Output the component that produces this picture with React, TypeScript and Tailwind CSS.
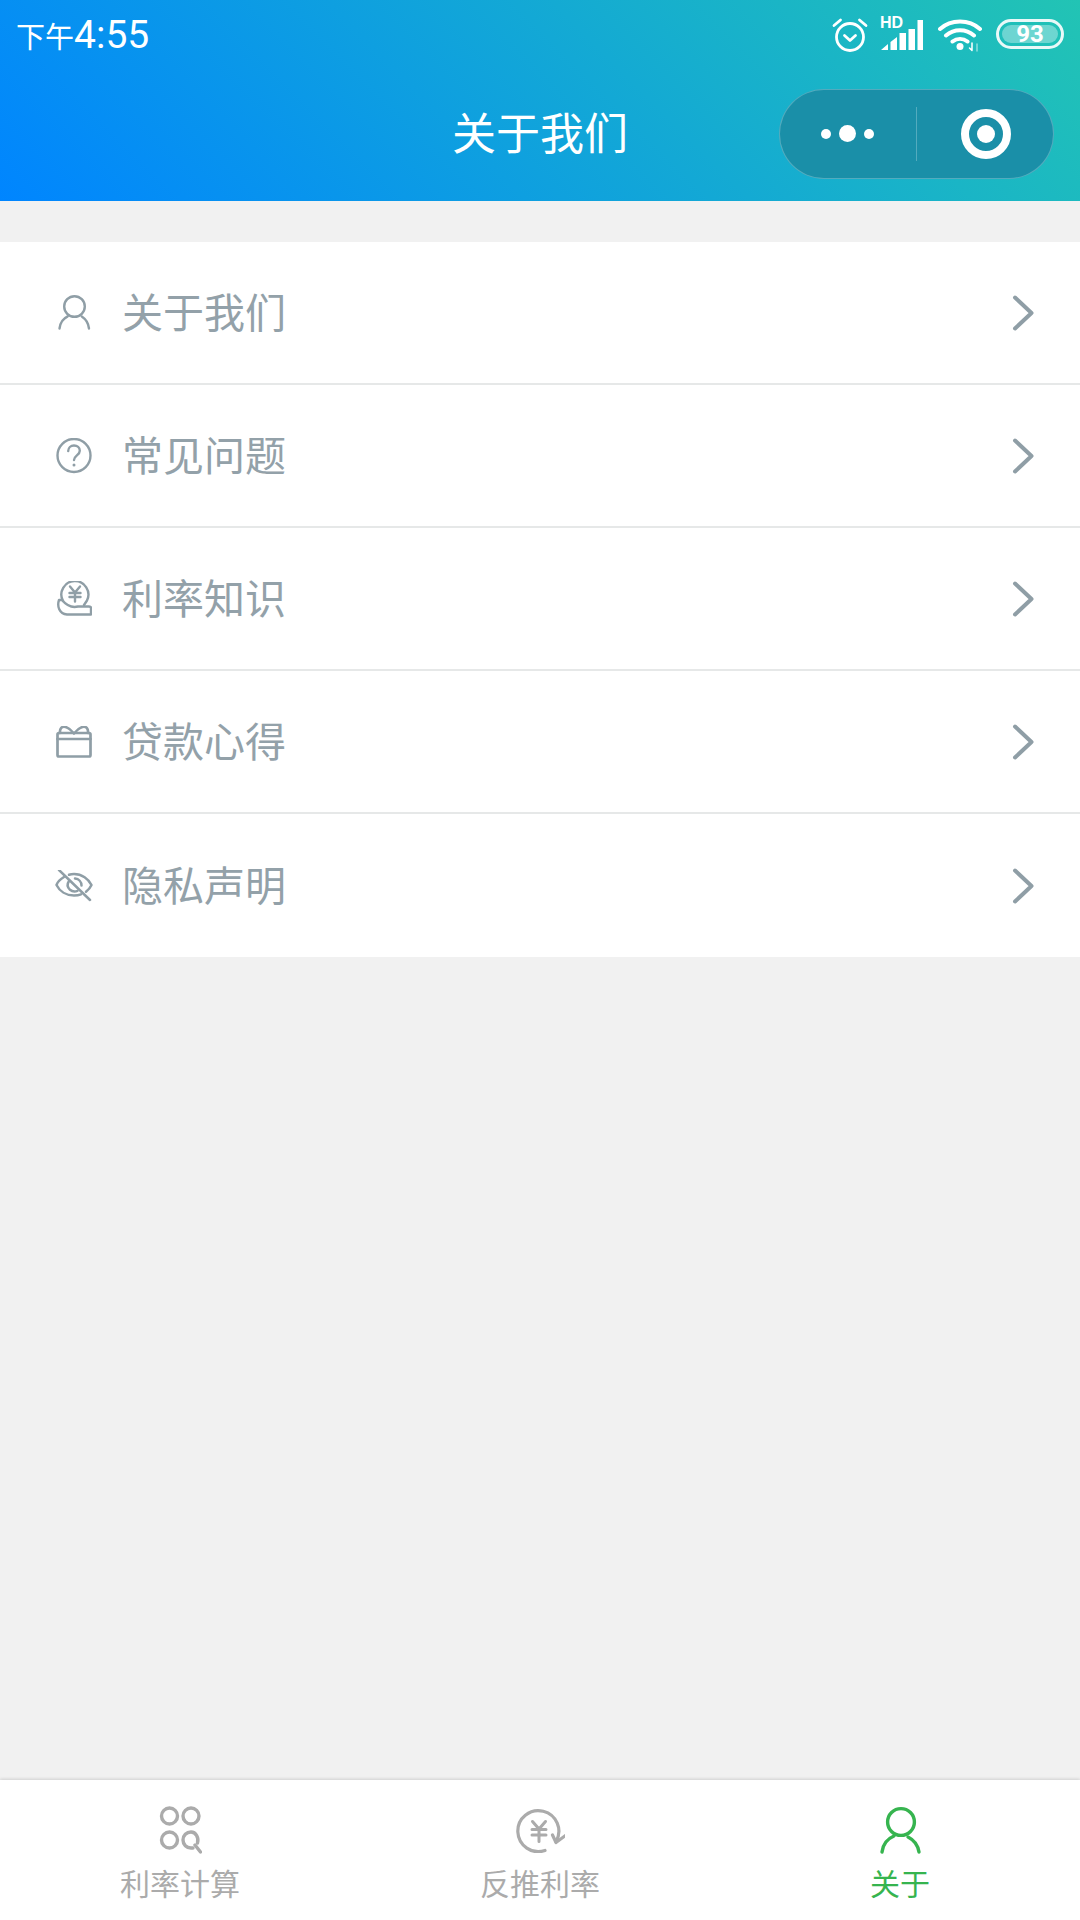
import React from 'react'

const CJK = "font-['Noto_Sans_CJK_SC','Noto_Sans',sans-serif]"

type IconProps = { className?: string }

const UserIcon = ({ className }: IconProps) => (
  <svg viewBox="0 0 36 36" fill="none" stroke="currentColor" strokeWidth="2.400" strokeLinecap="round" className={className}>
    <circle cx="18.500" cy="11.500" r="10.300" />
    <path d="M3.500 33.500c.6-5.600 3.600-10 8.200-12.200M33 33.500c-.6-5.600-3.300-9.400-7.200-12" />
  </svg>
)

const ActiveUserIcon = ({ className }: IconProps) => (
  <svg viewBox="0 0 44 48" fill="none" stroke="currentColor" strokeWidth="3.400" strokeLinecap="round" className={className}>
    <circle cx="23" cy="16" r="13.400" />
    <path d="M4 46C5 38 10 32.500 16 30M30 31c6 3 10 9 11 15" />
  </svg>
)

const HelpIcon = ({ className }: IconProps) => (
  <svg viewBox="0 0 36 36" fill="none" stroke="currentColor" strokeWidth="2.400" strokeLinecap="round" className={className}>
    <circle cx="18" cy="17.500" r="16.500" />
    <path d="M12.200 13.100c0-3.400 2.600-5.600 5.800-5.600s5.800 2.200 5.800 5.200c0 4.600-5.800 4.800-5.800 9.400" />
    <circle cx="18" cy="27.100" r="1.500" fill="currentColor" stroke="none" />
  </svg>
)

const MoneyHandIcon = ({ className }: IconProps) => (
  <svg viewBox="0 0 36 36" fill="none" stroke="currentColor" strokeWidth="2.400" strokeLinecap="round" strokeLinejoin="round" className={className}>
    <path d="M7 20A13.500 13.500 0 1 1 31 19.500L28 24" />
    <path d="M3 19C1 25 3 33 11 33.500H35V27c0-1-1-1.500-2-1.500H22c-6 1.500-11-.5-16-6.500z" />
    <path d="M14 5.500l5 6 5-6M13.500 12h11M13.500 16h11M19 11.500v9" />
  </svg>
)

const GiftIcon = ({ className }: IconProps) => (
  <svg viewBox="0 0 36 32" fill="none" stroke="currentColor" strokeWidth="2.700" strokeLinecap="round" strokeLinejoin="round" className={className}>
    <rect x="1.500" y="7" width="33" height="23.500" rx="1.500" />
    <path d="M1.500 13h33M4 7C3.500 2.500 6 0 9.500 1c3.500 1 6.500 4 8.500 6.500 2-2.500 5-5.500 8.500-6.500C30 0 32.500 2.500 32 7" />
  </svg>
)

const EyeOffIcon = ({ className }: IconProps) => (
  <svg viewBox="0 0 38 32" fill="none" stroke="currentColor" strokeWidth="2.500" strokeLinecap="round" strokeLinejoin="round" className={className}>
    <path d="M9 7C5.500 9 2.500 12 1.500 15c3 6 9.500 10.500 17.500 10.500 2.500 0 5-.4 7-1.200M14 4.800C15.500 4.300 17.200 4 19 4c8 0 14.500 5 17.500 11-1.200 2.600-3.200 5-5.500 6.800" />
    <path d="M14 11c-2 3-1.500 6.500 1 8.800 2.200 1.800 5 2 7.500 1M20 8.500c3.800.4 6.500 3.300 6.500 7" />
    <path d="M4 0l31 30" />
  </svg>
)

const Chevron = () => (
  <svg viewBox="0 0 22 36" fill="none" stroke="#8f9ea6" strokeWidth="4" strokeLinecap="round" strokeLinejoin="round" className="h-[36px] w-[22px]">
    <path d="M3 2.500L19.500 18 3 33.500" />
  </svg>
)

const GridSearchIcon = ({ className }: IconProps) => (
  <svg viewBox="-2 0 44 48" fill="none" stroke="currentColor" strokeWidth="3.400" strokeLinecap="round" className={className}>
    <circle cx="9.500" cy="10" r="8" />
    <circle cx="31" cy="10" r="8" />
    <circle cx="9.500" cy="34" r="8" />
    <path d="M37.500 37c1.500-5-1.500-11-6.500-11-4.500 0-8 3.500-8 8s3.500 8 8 8h2" />
    <path d="M35 39l5.500 7" />
  </svg>
)

const YuanCycleIcon = ({ className }: IconProps) => (
  <svg viewBox="0 0 50 46" fill="none" stroke="currentColor" strokeWidth="3.200" strokeLinecap="round" strokeLinejoin="round" className={className}>
    <path d="M30 43.500A20.500 20.500 0 1 1 41 34.500" />
    <path d="M37.500 28l3.500 7.500 9.500-7" />
    <path d="M17.500 14.500l6.500 7.500 6.500-7.500M17 22.500h14M17 28h14M24 22v12.500" strokeWidth="3" />
  </svg>
)

const menu = [
  { label: '关于我们', icon: <UserIcon className="h-[36px] w-[36px]" /> },
  { label: '常见问题', icon: <HelpIcon className="h-[36px] w-[36px]" /> },
  { label: '利率知识', icon: <MoneyHandIcon className="h-[36px] w-[36px]" /> },
  { label: '贷款心得', icon: <GiftIcon className="h-[32px] w-[36px]" /> },
  { label: '隐私声明', icon: <EyeOffIcon className="-ml-[1px] h-[32px] w-[38px]" /> },
]

const StatusIcons = () => (
  <div className="flex items-center text-white">
    <svg viewBox="0 0 36 34" fill="none" stroke="white" strokeWidth="2.800" strokeLinecap="round" strokeLinejoin="round" className="h-[34px] w-[36px]">
      <circle cx="18" cy="19" r="13.500" />
      <path d="M12.500 17.500l5.500 5 5.500-5M2 7.500l6.500-5.500M34 7.500l-6.500-5.500" />
    </svg>
    <div className="relative ml-[12px] h-[32px] w-[44px]">
      <span className="absolute left-0 top-[-5px] font-['Liberation_Sans',sans-serif] text-[16px] leading-[18px] font-bold">HD</span>
      <svg viewBox="0 0 44 32" fill="white" className="absolute inset-0 h-[32px] w-[44px]">
        <path d="M1 31l7-6v6zM10.500 23l6.500-5v13h-6.500zM19.500 14h6.500v17h-6.500zM28.500 10h6.500v21h-6.500zM37.500 1h5.500v30h-5.500z" />
      </svg>
    </div>
    <svg viewBox="0 0 44 34" fill="none" stroke="white" strokeWidth="4" strokeLinecap="round" className="ml-[14px] h-[34px] w-[44px]">
      <path d="M2 11c11-10 29-10 40 0M8 17.500c8-7 20-7 28 0M14.500 23.500c4.500-3.500 10.500-3.500 15 0" />
      <circle cx="22" cy="28.500" r="3.500" fill="white" stroke="none" />
      <path d="M34 25v7M31.500 30l2.500 2.500" strokeWidth="1.500" />
      <path d="M39 26v7" strokeWidth="1.500" opacity="0.5" />
    </svg>
    <div className="mb-[2px] ml-[14px] flex h-[30px] w-[68px] items-center rounded-full border-[3px] border-white/90 p-[3px]">
      <div className="relative flex h-full w-[56px] items-center justify-center rounded-full bg-white/35">
        <span className="font-['Roboto',sans-serif] text-[24px] leading-none font-bold text-white">93</span>
      </div>
    </div>
  </div>
)

function MenuRow({ label, icon }: { label: string; icon: React.ReactNode }) {
  return (
    <div className="flex h-[143px] items-center border-b-2 border-[#e6e8e8] pr-[46px] last:border-b-0">
      <div className="flex w-[122px] justify-start pl-[56px] text-[#8f9ea6]">{icon}</div>
      <span className="flex-1 pb-[5px] text-[41px] leading-none text-[#93a1a9]">{label}</span>
      <Chevron />
    </div>
  )
}

function TabItem({ label, icon, active }: { label: string; icon: React.ReactNode; active?: boolean }) {
  return (
    <div className={`flex flex-1 flex-col items-center ${active ? 'text-[#36b44f]' : 'text-[#ababab]'}`}>
      <div className="flex h-[52px] items-center justify-center">{icon}</div>
      <span className="mt-[6px] text-[30px] leading-[40px]">{label}</span>
    </div>
  )
}

export default function App() {
  return (
    <div className={`flex h-[1920px] w-[1080px] flex-col bg-[#f1f1f1] ${CJK}`}>
      <header className="h-[201px] bg-linear-45/srgb from-[#0085ff] to-[#22c4b4]">
        <div className="flex h-[66px] items-center justify-between px-[16px] pt-[4px]">
          <div className="flex items-baseline text-white">
            <span className="text-[29px] leading-none">下午</span>
            <span className="font-['Roboto',sans-serif] text-[39px] leading-none">4:55</span>
          </div>
          <StatusIcons />
        </div>
        <div className="grid h-[135px] grid-cols-[1fr_auto_1fr] items-center">
          <div />
          <h1 className="pb-[5px] text-[44px] leading-none font-normal text-white">关于我们</h1>
          <div className="flex justify-end pr-[26px]">
            <div className="flex h-[90px] w-[275px] items-center rounded-full border border-white/25 bg-[#1a8fa8]">
              <div className="flex w-[136px] items-center justify-center gap-[8px] pr-[2px]">
                <span className="h-[10px] w-[10px] rounded-full bg-white" />
                <span className="h-[17px] w-[17px] rounded-full bg-white" />
                <span className="h-[10px] w-[10px] rounded-full bg-white" />
              </div>
              <div className="h-[54px] w-px bg-white/25" />
              <div className="flex flex-1 items-center justify-center pl-[2px]">
                <div className="flex h-[50px] w-[50px] items-center justify-center rounded-full border-[8px] border-white">
                  <div className="h-[18px] w-[18px] rounded-full bg-white" />
                </div>
              </div>
            </div>
          </div>
        </div>
      </header>

      <main className="mt-[41px] bg-white">
        {menu.map(item => (
          <MenuRow key={item.label} label={item.label} icon={item.icon} />
        ))}
      </main>

      <div className="flex-1" />

      <nav className="flex h-[140px] bg-white pt-[24px] shadow-[0_-1px_3px_rgba(0,0,0,0.14)]">
        <TabItem label="利率计算" icon={<GridSearchIcon className="h-[48px] w-[44px]" />} />
        <TabItem label="反推利率" icon={<YuanCycleIcon className="h-[46px] w-[50px]" />} />
        <TabItem label="关于" active icon={<ActiveUserIcon className="h-[48px] w-[44px]" />} />
      </nav>
    </div>
  )
}
